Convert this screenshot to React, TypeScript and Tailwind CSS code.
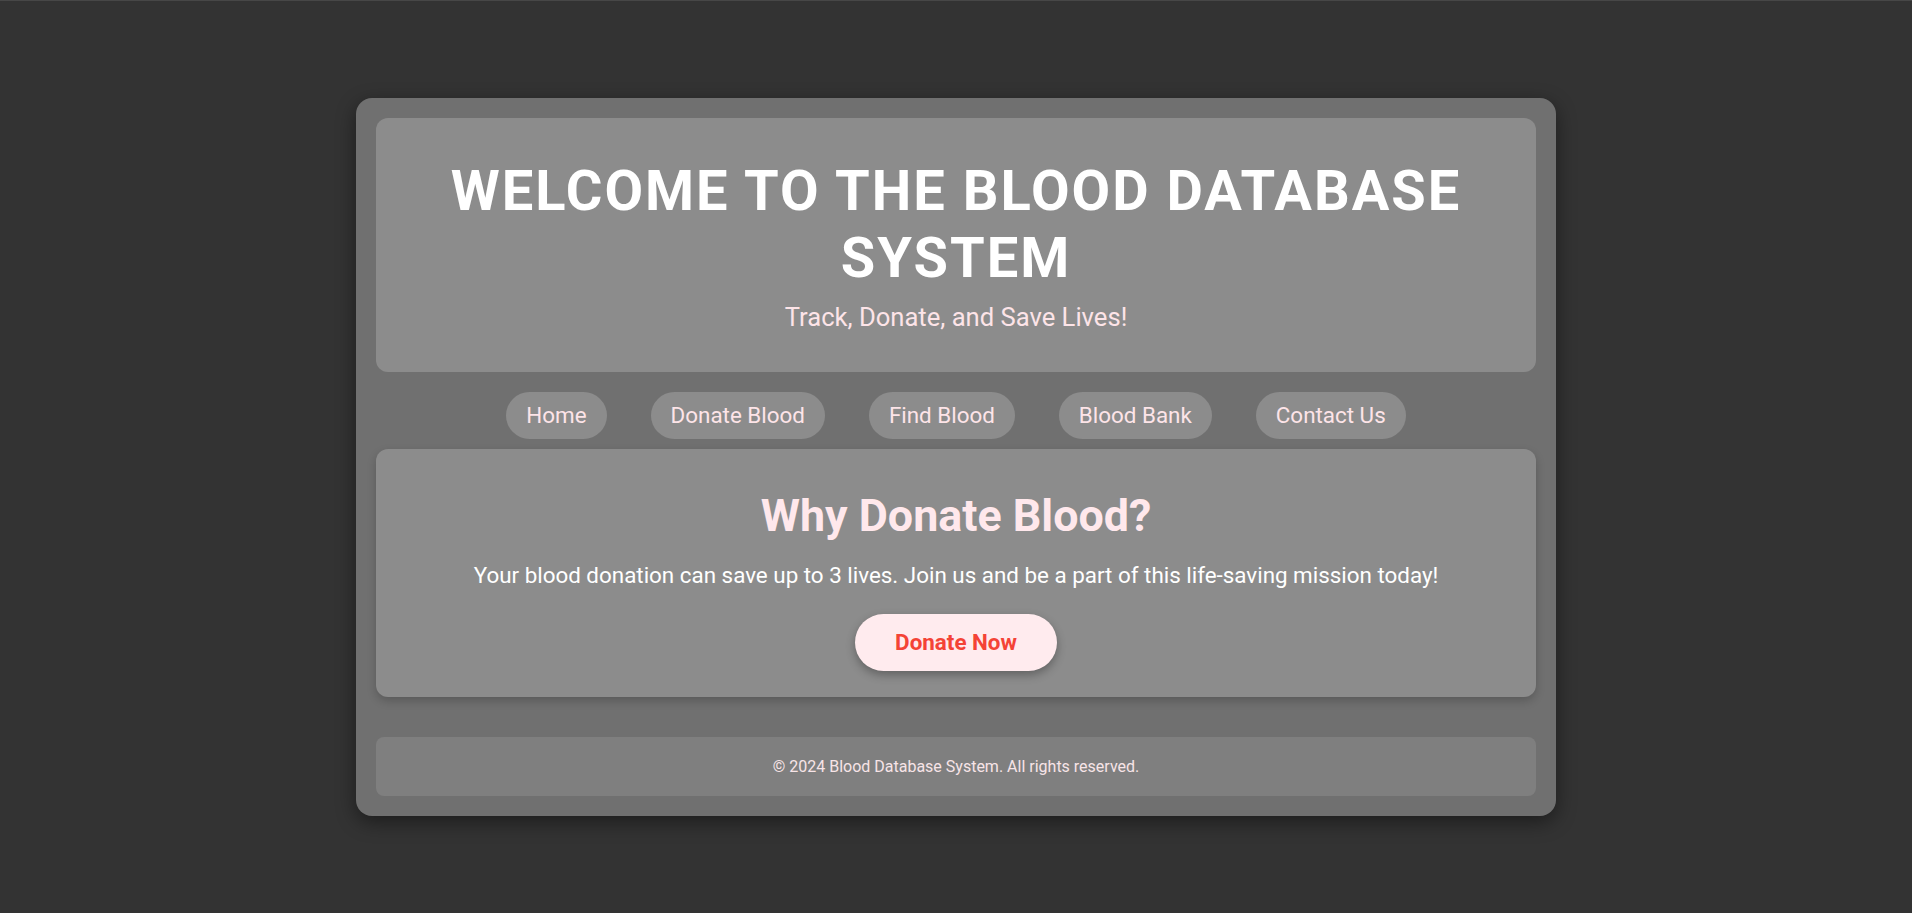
const links = ['Home', 'Donate Blood', 'Find Blood', 'Blood Bank', 'Contact Us']

export default function App() {
  return (
    <div
      className="min-h-screen flex items-center justify-center bg-[#333333] border-t border-[#474747]"
      style={{ fontFamily: 'Roboto, "Noto Sans", sans-serif' }}
    >
      <div className="w-[1200px] bg-[#707070] rounded-2xl p-5 shadow-[0_6px_20px_rgba(0,0,0,0.45)]">
        <header className="bg-[#8c8c8c] rounded-xl px-10 pt-10 pb-10 text-center">
          <h1 className="text-white font-bold text-[56px] leading-[67px] tracking-[2px]">
            WELCOME TO THE BLOOD DATABASE SYSTEM
          </h1>
          <p className="mt-[10px] text-[#fde4e8] text-[25.6px] leading-[30px]">
            Track, Donate, and Save Lives!
          </p>
        </header>

        <nav className="flex justify-center gap-[44px] mt-5 mb-[10px]">
          {links.map(link => (
            <a
              key={link}
              href="#"
              className="bg-[#8c8c8c] text-[#fde4e8] rounded-full px-5 py-[10px] text-[22.4px] leading-[27px]"
            >
              {link}
            </a>
          ))}
        </nav>

        <main className="bg-[#8c8c8c] rounded-xl pt-10 pb-[26px] text-center shadow-[0_4px_10px_rgba(0,0,0,0.2)]">
          <h2 className="text-[#ffe8ec] font-bold text-[44.8px] leading-[53px]">Why Donate Blood?</h2>
          <p className="mt-5 text-white text-[22.4px] leading-[26px]">
            Your blood donation can save up to 3 lives. Join us and be a part of this life-saving mission today!
          </p>
          <button className="mt-[26px] w-[202px] h-[57px] rounded-full bg-[#ffebee] text-[#f44336] font-bold text-[22.4px] shadow-[0_4px_10px_rgba(0,0,0,0.3)]">
            Donate Now
          </button>
        </main>

        <footer className="mt-10 bg-[#7f7f7f] rounded-lg h-[59px] flex items-center justify-center">
          <p className="text-[#f7e4e7] text-[16px]">© 2024 Blood Database System. All rights reserved.</p>
        </footer>
      </div>
    </div>
  )
}
